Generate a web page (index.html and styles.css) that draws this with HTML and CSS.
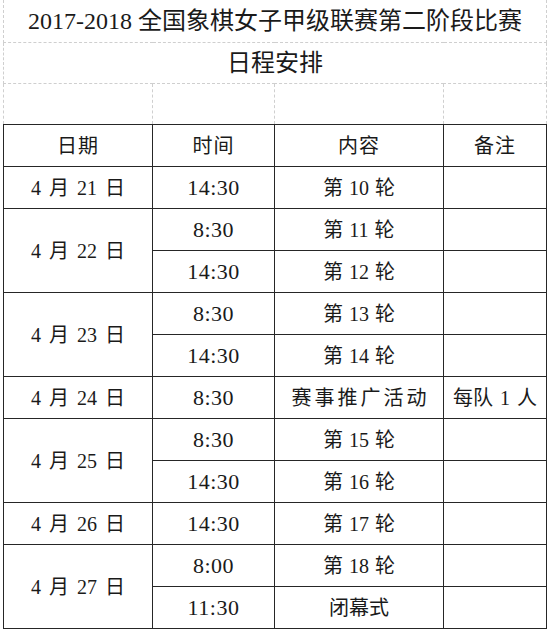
FILE: index.html
```html
<!DOCTYPE html>
<html lang="zh">
<head>
<meta charset="utf-8">
<title>日程安排</title>
<link rel="stylesheet" href="styles.css">
</head>
<body>
<table class="sheet">
  <colgroup>
    <col class="c-date">
    <col class="c-time">
    <col class="c-content">
    <col class="c-note">
  </colgroup>
  <tr class="grid first"><td class="title" colspan="4">2017-2018 全国象棋女子甲级联赛第二阶段比赛</td></tr>
  <tr class="grid"><td class="title" colspan="4">日程安排</td></tr>
  <tr class="grid"><td></td><td></td><td></td><td></td></tr>
  <tr class="head"><td>日期</td><td>时间</td><td>内容</td><td>备注</td></tr>
  <tr><td class="date">4 月 21 日</td><td class="num">14:30</td><td>第 10 轮</td><td></td></tr>
  <tr><td class="date" rowspan="2">4 月 22 日</td><td class="num">8:30</td><td>第 11 轮</td><td></td></tr>
  <tr><td class="num">14:30</td><td>第 12 轮</td><td></td></tr>
  <tr><td class="date" rowspan="2">4 月 23 日</td><td class="num">8:30</td><td>第 13 轮</td><td></td></tr>
  <tr><td class="num">14:30</td><td>第 14 轮</td><td></td></tr>
  <tr><td class="date">4 月 24 日</td><td class="num">8:30</td><td class="spread">赛事推广活动</td><td class="note">每队 1 人</td></tr>
  <tr><td class="date" rowspan="2">4 月 25 日</td><td class="num">8:30</td><td>第 15 轮</td><td></td></tr>
  <tr><td class="num">14:30</td><td>第 16 轮</td><td></td></tr>
  <tr><td class="date">4 月 26 日</td><td class="num">14:30</td><td>第 17 轮</td><td></td></tr>
  <tr><td class="date" rowspan="2">4 月 27 日</td><td class="num">8:00</td><td>第 18 轮</td><td></td></tr>
  <tr><td class="num">11:30</td><td>闭幕式</td><td></td></tr>
</table>
</body>
</html>
```

FILE: styles.css
```css
html, body {
  margin: 0;
  padding: 0;
  background: #ffffff;
}

body {
  padding-left: 3px;
  font-family: "Liberation Serif", "Noto Sans CJK SC", serif;
  color: #1a1a1a;
}

.sheet {
  border-collapse: collapse;
  table-layout: fixed;
  width: 543px;
}

.c-date { width: 149px; }
.c-time { width: 122px; }
.c-content { width: 169px; }
.c-note { width: 103px; }

.sheet td {
  border: 1px solid #262626;
  height: 41px;
  padding: 0;
  text-align: center;
  vertical-align: middle;
  font-size: 20px;
  line-height: 1;
  white-space: nowrap;
  word-spacing: 1px;
}

.sheet tr.grid td {
  border: 1px dashed #cfcfcf;
  height: 40px;
}

.sheet tr.grid.first td {
  border-top: none;
  height: 42px;
}

.sheet td.title {
  font-size: 24px;
  word-spacing: 0;
}

.sheet tr.head td {
  font-size: 20px;
  letter-spacing: 1px;
}

.sheet td.date {
  word-spacing: 3px;
}

.sheet td.num {
  font-size: 22px;
  letter-spacing: 0.5px;
}

.sheet td.spread {
  letter-spacing: 3px;
  padding-left: 3px;
}

.sheet td.note {
  word-spacing: 2px;
}
```
